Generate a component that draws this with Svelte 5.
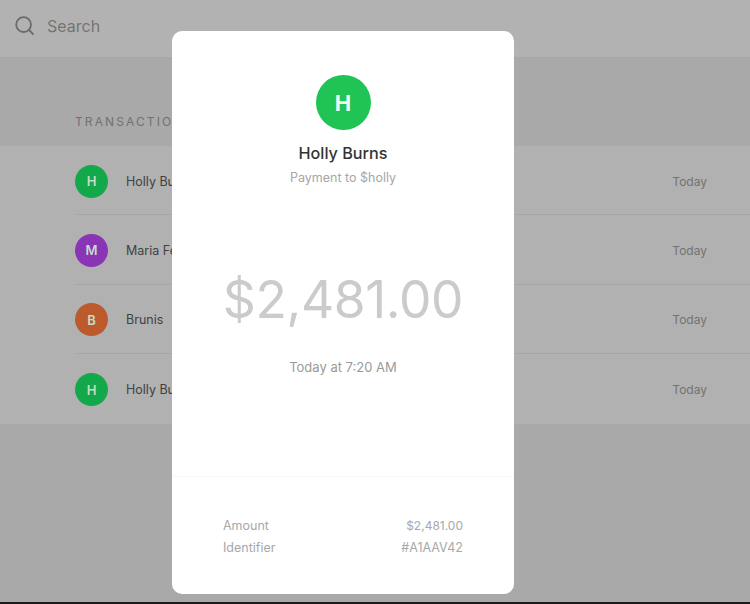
<script>
  const rows = [
    { initial: 'H', name: 'Holly Burns', color: 'green' },
    { initial: 'M', name: 'Maria Fernandez', color: 'purple' },
    { initial: 'B', name: 'Brunis', color: 'orange' },
    { initial: 'H', name: 'Holly Burns', color: 'green' }
  ];
</script>

<div class="page">
  <header class="search">
    <svg class="icon" width="20" height="20" viewBox="0 0 20 20" fill="none" aria-hidden="true">
      <circle cx="8.6" cy="8.6" r="7.4" />
      <path d="M14 14l4.6 4.6" />
    </svg>
    <span>Search</span>
  </header>

  <h2 class="section">TRANSACTIONS</h2>

  <ul class="list">
    {#each rows as row}
      <li class="row">
        <div class="avatar {row.color}">{row.initial}</div>
        <div class="name">{row.name}</div>
        <div class="when">Today</div>
      </li>
    {/each}
  </ul>

  <div class="modal">
    <div class="top">
      <div class="big-avatar">H</div>
      <div class="title">Holly Burns</div>
      <div class="sub">Payment to $holly</div>
      <div class="amount">$2,481.00</div>
      <div class="time">Today at 7:20 AM</div>
    </div>
    <dl class="details">
      <div class="line"><dt>Amount</dt><dd class="money">$2,481.00</dd></div>
      <div class="line"><dt>Identifier</dt><dd>#A1AAV42</dd></div>
    </dl>
  </div>
  <div class="edge"></div>
</div>

<style>
  :global(body) {
    margin: 0;
    background: #a9a9a9;
  }
  .page {
    position: relative;
    width: 750px;
    height: 604px;
    overflow: hidden;
    background: #a9a9a9;
    font-family: Inter, "Liberation Sans", sans-serif;
  }
  .search {
    height: 58px;
    box-sizing: border-box;
    display: flex;
    align-items: center;
    gap: 12px;
    padding: 0 0 5px 15px;
    background: #b2b2b2;
    border-bottom: 1px solid #a8a8a8;
    color: #757575;
    font-size: 16px;
  }
  .icon circle,
  .icon path {
    stroke: #6b6b6b;
    stroke-width: 1.8;
  }
  .section {
    margin: 0;
    height: 88px;
    box-sizing: border-box;
    padding: 56px 0 0 75px;
    font-size: 12px;
    line-height: 16px;
    font-weight: 400;
    letter-spacing: 2.1px;
    color: #717171;
  }
  .list {
    margin: 0;
    padding: 0 0 0 75px;
    list-style: none;
    background: #b1b1b1;
    height: 278px;
  }
  .row {
    height: 69.3px;
    box-sizing: border-box;
    display: flex;
    align-items: center;
    padding-right: 43px;
    padding-top: 2px;
    border-bottom: 1px solid #a7a7a7;
  }
  .row:last-child {
    border-bottom: 0;
  }
  .avatar {
    width: 33px;
    height: 33px;
    border-radius: 50%;
    display: flex;
    align-items: center;
    justify-content: center;
    color: #c4dccb;
    font-size: 13px;
    font-weight: 600;
    flex: none;
  }
  .green { background: #13a84a; }
  .purple { background: #8a35b5; }
  .orange { background: #bd5a2c; }
  .name {
    margin-left: 18px;
    flex: 1;
    font-size: 12.5px;
    color: #414141;
  }
  .when {
    font-size: 12px;
    color: #737373;
  }
  .modal {
    position: absolute;
    left: 172px;
    top: 31px;
    width: 342px;
    height: 563px;
    border-radius: 10px;
    background: #fff;
    display: flex;
    flex-direction: column;
  }
  .top {
    flex: 1;
    display: flex;
    flex-direction: column;
    align-items: center;
    padding-top: 44px;
    border-bottom: 1px solid #f7f7f7;
  }
  .big-avatar {
    width: 55px;
    height: 55px;
    border-radius: 50%;
    background: #1fc454;
    color: #eefaf1;
    display: flex;
    align-items: center;
    justify-content: center;
    font-size: 22px;
    font-weight: 700;
  }
  .title {
    margin-top: 13px;
    font-size: 16.2px;
    line-height: 20px;
    font-weight: 500;
    color: #333;
  }
  .sub {
    margin-top: 7px;
    font-size: 12.5px;
    line-height: 16px;
    color: #a6a6a6;
  }
  .amount {
    margin-top: 78px;
    font-size: 51.5px;
    line-height: 70px;
    font-weight: 400;
    letter-spacing: -0.4px;
    color: #cbcbcb;
  }
  .time {
    margin-top: 24px;
    font-size: 13px;
    line-height: 18px;
    color: #9a9a9a;
  }
  .details {
    margin: 0;
    height: 117px;
    box-sizing: border-box;
    padding: 38px 51px 0;
  }
  .line {
    display: flex;
    justify-content: space-between;
    font-size: 12.5px;
    line-height: 22px;
    color: #a8a8a8;
  }
  .money {
    font-size: 12px;
  }
  dt, dd {
    margin: 0;
  }
  .edge {
    position: absolute;
    left: 0;
    right: 0;
    bottom: 0;
    height: 2px;
    background: #1c1c1c;
  }
</style>
